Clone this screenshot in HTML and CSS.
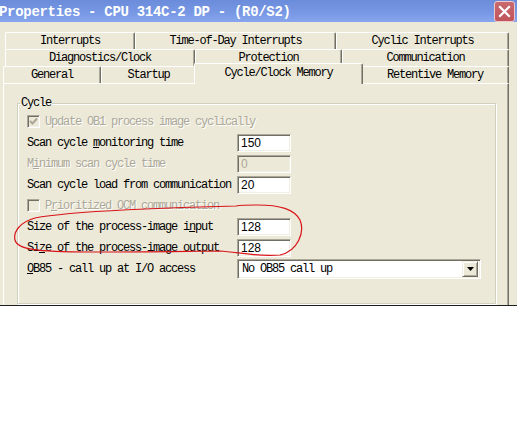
FILE: index.html
```html
<!DOCTYPE html>
<html>
<head>
<meta charset="utf-8">
<link rel="stylesheet" href="styles.css">
</head>
<body>
<div class="dialog">
  <div class="titlebar">
    <span class="title">Properties - CPU 314C-2 DP - (R0/S2)</span>
    <span class="close"><svg width="13" height="13" viewBox="0 0 13 13"><path d="M2 2 L11 11 M11 2 L2 11" stroke="#fff" stroke-width="2.2" stroke-linecap="square"/></svg></span>
  </div>
  <div class="tabs">
    <div class="tabrow back">
      <div class="tab t-int">Interrupts</div>
      <div class="tab t-tod">Time-of-Day Interrupts</div>
      <div class="tab t-cyc">Cyclic Interrupts</div>
    </div>
    <div class="tabrow back">
      <div class="tab t-diag">Diagnostics/Clock</div>
      <div class="tab t-prot">Protection</div>
      <div class="tab t-comm">Communication</div>
    </div>
    <div class="tabrow front">
      <div class="tab t-gen">General</div>
      <div class="tab t-start">Startup</div>
      <div class="tab t-ccm sel">Cycle/Clock Memory</div>
      <div class="tab t-ret">Retentive Memory</div>
    </div>
  </div>
  <div class="panel">
    <fieldset class="group">
      <legend>Cycle</legend>
      <div class="row">
        <span class="check"><svg width="9" height="9" viewBox="0 0 9 9"><path d="M1 4 L3.5 6.5 L8 1.5" stroke="#aca899" stroke-width="2" fill="none"/></svg></span>
        <span class="dis">Update OB1 process image cyclically</span>
      </div>
      <div class="row">
        <span class="label">Scan cycle <u>m</u>onitoring time</span>
        <span class="input">150</span>
      </div>
      <div class="row">
        <span class="label dis">M<u>i</u>nimum scan cycle time</span>
        <span class="input off">0</span>
      </div>
      <div class="row">
        <span class="label">Scan cycle load from communication</span>
        <span class="input">20</span>
      </div>
      <div class="row">
        <span class="check"></span>
        <span class="dis">P<u>r</u>ioritized OCM communication</span>
      </div>
      <div class="row">
        <span class="label">Size of the process-image i<u>n</u>put</span>
        <span class="input">128</span>
      </div>
      <div class="row">
        <span class="label">Si<u>z</u>e of the process-image output</span>
        <span class="input">128</span>
      </div>
      <div class="row">
        <span class="label"><u>O</u>B85 - call up at I/O access</span>
        <span class="combo"><span class="combo-text">No OB85 call up</span><span class="combo-btn"><svg width="7" height="4" viewBox="0 0 7 4"><path d="M0 0 H7 L3.5 4 Z" fill="#000"/></svg></span></span>
      </div>
    </fieldset>
  </div>
  <svg class="annot" width="517" height="306" viewBox="0 0 517 306">
    <path d="M212 82 L240 82.4 L318 82.6 L336 83" stroke="#d8141a" stroke-width="1.2" fill="none"/>
    <path d="M236 206 C180 207 70 211 35 218 C20 222 13 232 15 240 C17 249 35 252 90 252 C150 252 200 251 220 251 C238 252 255 257 280 255 C298 251 305 232 300 220 C294 209 280 205 257 205 C248 205 242 205 236 206" stroke="#d8141a" stroke-width="1.2" fill="none"/>
  </svg>
</div>
</body>
</html>
```
FILE: styles.css
```css
* { box-sizing: border-box; }
body {
  margin: 0;
  background: #fff;
  font-family: "Liberation Mono", "DejaVu Sans Mono", monospace;
  font-size: 12px;
  letter-spacing: -1.2px;
  color: #000;
}
.dialog {
  position: relative;
  width: 517px;
  height: 306px;
  background: #ece9d8;
  border-bottom: 1px solid #1e1e1e;
  overflow: hidden;
}
.titlebar {
  height: 22px;
  display: flex;
  align-items: center;
  justify-content: space-between;
  background: linear-gradient(#6b8cdb, #7797e3 55%, #87a6ee);
}
.title {
  color: #fff;
  font-weight: bold;
  font-size: 14px;
  letter-spacing: -0.3px;
  margin-left: -1px;
  margin-top: 1px;
}
.close {
  width: 21px;
  height: 21px;
  margin-right: 2px;
  background: linear-gradient(#c96a6e, #c0555b);
  border: 1px solid #f0c8c8;
  border-radius: 3px;
  display: flex;
  align-items: center;
  justify-content: center;
}
.tabs { padding-top: 10px; }
.tabrow { display: flex; height: 17px; }
.tabrow.back { padding-left: 5px; }
.tabrow.front { padding-left: 3px; }
.tab {
  height: 17px;
  display: flex;
  align-items: center;
  justify-content: center;
  background: #ece9d8;
  border-top: 1px solid #fff;
  border-left: 1px solid #fff;
  border-right: 1px solid #716f64;
  box-shadow: inset -1px 0 #aca899;
  border-radius: 2px 2px 0 0;
  white-space: nowrap;
}
.t-int { width: 130px; }
.t-tod { width: 201px; }
.t-cyc { width: 173px; }
.t-diag { width: 190px; }
.t-prot { width: 147px; }
.t-comm { width: 167px; }
.t-gen { width: 98px; }
.t-start { width: 95px; }
.t-ccm { width: 165px; }
.t-ret { width: 148px; }
.tab.sel {
  position: relative;
  z-index: 1;
  width: 169px;
  height: 21px;
  margin: -3px -2px 0;
  padding-bottom: 2px;
}
.panel {
  margin-left: 3px;
  width: 506px;
  height: 222px;
  border-top: 1px solid #fff;
  border-left: 1px solid #fff;
  border-right: 1px solid #716f64;
  box-shadow: inset -1px 0 #aca899;
  padding: 0 12px 0 13px;
}
.group {
  margin: 12px 0 0;
  height: 208px;
  padding: 0 0 0 9px;
  border: 1px solid #d0d0bf;
  box-shadow: inset 1px 1px #fff, 1px 1px #fff;
}
.group legend {
  margin-left: -7px;
  padding: 0 1px;
  line-height: 14px;
}
.row {
  display: flex;
  align-items: center;
  height: 21px;
}
.row:first-of-type { margin-top: 1px; }
.label { width: 210px; white-space: nowrap; }
.dis { color: #aca899; text-shadow: 1px 1px #fff; white-space: nowrap; }
.check {
  width: 13px;
  height: 13px;
  margin-right: 5px;
  display: flex;
  align-items: center;
  justify-content: center;
  border: 1px solid;
  border-color: #aca899 #fff #fff #aca899;
  box-shadow: inset 1px 1px #716f64, inset -1px -1px #f1efe2;
  background: #ece9d8;
}
.input {
  width: 54px;
  height: 18px;
  display: flex;
  align-items: center;
  padding-left: 3px;
  background: #fff;
  border: 1px solid;
  border-color: #aca899 #fff #fff #aca899;
  box-shadow: inset 1px 1px #716f64, inset -1px -1px #f1efe2;
  font-family: "Liberation Sans", Arial, sans-serif;
  letter-spacing: 0;
  font-size: 12px;
}
.input.off { background: #ece9d8; color: #aca899; }
.combo {
  width: 244px;
  height: 20px;
  display: flex;
  align-items: center;
  justify-content: space-between;
  background: #fff;
  border: 1px solid;
  border-color: #aca899 #fff #fff #aca899;
  box-shadow: inset 1px 1px #716f64, inset -1px -1px #f1efe2;
  padding: 2px 2px 2px 4px;
}
.combo-btn {
  width: 16px;
  height: 16px;
  display: flex;
  align-items: center;
  justify-content: center;
  background: #ece9d8;
  border: 1px solid;
  border-color: #f1efe2 #716f64 #716f64 #f1efe2;
  box-shadow: inset 1px 1px #fff, inset -1px -1px #aca899;
}
.annot {
  position: absolute;
  left: 0;
  top: 0;
  pointer-events: none;
}
```
